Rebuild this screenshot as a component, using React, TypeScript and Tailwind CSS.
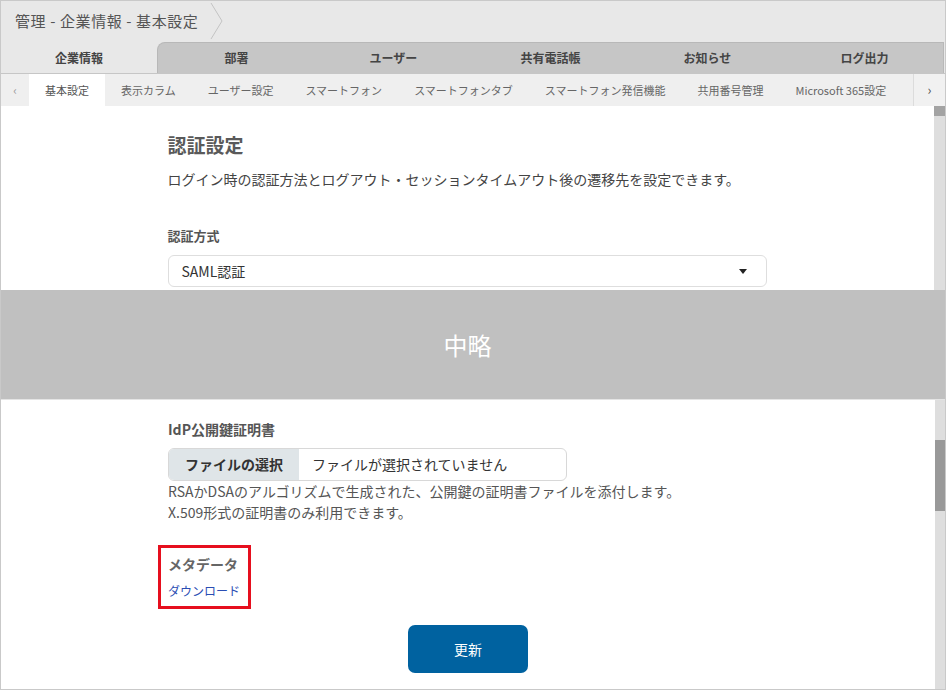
import React from "react";

const mainTabs = ["部署", "ユーザー", "共有電話帳", "お知らせ", "ログ出力"];
const subTabs = [
  "表示カラム",
  "ユーザー設定",
  "スマートフォン",
  "スマートフォンタブ",
  "スマートフォン発信機能",
  "共用番号管理",
  "Microsoft 365設定",
];

export default function App() {
  return (
    <div className="w-[946px] h-[690px] border border-[#c9c9c9] overflow-hidden flex flex-col bg-white font-['Noto_Sans_CJK_JP','Noto_Sans',sans-serif]">
      {/* breadcrumb header */}
      <div className="h-[41px] shrink-0 bg-[#e8e8e8] flex items-center pl-[14px] text-[15px] text-[#555]">
        <span className="tracking-[0.6px]">管理 - 企業情報 - 基本設定</span>
        <svg width="14" height="41" viewBox="0 0 14 41" className="ml-[12px]">
          <polyline points="1,2 12,20 1,38" fill="none" stroke="#c4c4c4" strokeWidth="1" />
        </svg>
      </div>

      {/* main tabs */}
      <div className="h-[32px] shrink-0 bg-[#e8e8e8] flex border-b border-[#c6c6c6]">
        <div className="w-[156px] flex items-center justify-center text-[12px] font-bold text-[#444]">
          企業情報
        </div>
        <div className="flex-1 mr-[1px] flex bg-[#c6c6c6] rounded-tl-[8px] border-t border-l border-r border-[#b8b8b8]">
          {mainTabs.map((t) => (
            <div key={t} className="flex-1 flex items-center justify-center text-[12px] font-bold text-[#444]">
              {t}
            </div>
          ))}
        </div>
      </div>

      {/* sub tabs */}
      <div className="h-[32px] shrink-0 bg-[#efefef] flex text-[11px] text-[#666]">
        <div className="w-[28px] flex items-center justify-center text-[#999] text-[12px]">‹</div>
        <div className="px-[16px] flex items-center bg-white text-[#555]">基本設定</div>
        {subTabs.map((t) => (
          <div key={t} className="px-[16px] flex items-center whitespace-nowrap">
            {t}
          </div>
        ))}
        <div className="flex-1" />
        <div className="w-[32px] flex items-center justify-center border-l border-[#dcdcdc] bg-[#f1f1f1] text-[#555] text-[13px]">
          ›
        </div>
      </div>

      {/* top content */}
      <div className="h-[184px] shrink-0 flex">
        <div className="flex-1 flex justify-center overflow-hidden">
          <div className="w-[600px] pt-[26px]">
            <div className="text-[19px] leading-[26px] font-bold text-[#5a5a5a]">認証設定</div>
            <div className="mt-[11px] text-[14px] leading-[21px] text-[#444]">
              ログイン時の認証方法とログアウト・セッションタイムアウト後の遷移先を設定できます。
            </div>
            <div className="mt-[36px] text-[13px] leading-[20px] font-semibold text-[#555]">認証方式</div>
            <div className="mt-[9px] h-[32px] w-[599px] border border-[#dedede] rounded-[6px] flex items-center justify-between pl-[13px] pr-[19px] text-[14px] text-[#333]">
              <span>SAML認証</span>
              <svg width="8" height="5" viewBox="0 0 8 5">
                <polygon points="0,0 8,0 4,5" fill="#222" />
              </svg>
            </div>
          </div>
        </div>
        <div className="w-[11px] bg-[#dedede] flex flex-col">
          <div className="h-[10px] bg-[#a3a3a3]" />
        </div>
      </div>

      {/* omitted band */}
      <div className="h-[110px] shrink-0 bg-[#c0c0c0] border-b border-[#e4e4e4] flex items-center justify-center pr-[11px] text-[24px] text-white">
        中略
      </div>

      {/* bottom content */}
      <div className="flex-1 flex min-h-0">
        <div className="flex-1 flex justify-center overflow-hidden">
          <div className="w-[600px] pt-[19px] flex flex-col">
            <div className="text-[14px] leading-[20px] font-bold text-[#555]">IdP公開鍵証明書</div>
            <div className="mt-[9px] h-[33px] w-[399px] border border-[#d8d8d8] rounded-[6px] overflow-hidden flex text-[14px]">
              <div className="w-[130px] bg-[#dfe5e8] flex items-center justify-center font-bold text-[#333]">
                ファイルの選択
              </div>
              <div className="flex items-center pl-[13px] text-[#333]">ファイルが選択されていません</div>
            </div>
            <div className="text-[14px] leading-[21px] text-[#555]">
              RSAかDSAのアルゴリズムで生成された、公開鍵の証明書ファイルを添付します。
              <br />
              X.509形式の証明書のみ利用できます。
            </div>
            <div className="mt-[22px] -ml-[10px] w-[93px] h-[64px] border-[3px] border-[#e60f1e] pl-[7px] pt-[6px]">
              <div className="text-[14px] leading-[20px] font-bold text-[#666] whitespace-nowrap">メタデータ</div>
              <div className="mt-[8px] text-[12px] leading-[18px] text-[#2a4db3] whitespace-nowrap">ダウンロード</div>
            </div>
            <div className="mt-[16px] self-center">
              <button className="w-[120px] h-[48px] rounded-[7px] bg-[#0062a0] text-white text-[14px]">
                更新
              </button>
            </div>
          </div>
        </div>
        <div className="w-[10px] bg-[#dedede] flex flex-col">
          <div className="mt-[40px] h-[71px] bg-[#999999]" />
        </div>
      </div>
    </div>
  );
}
